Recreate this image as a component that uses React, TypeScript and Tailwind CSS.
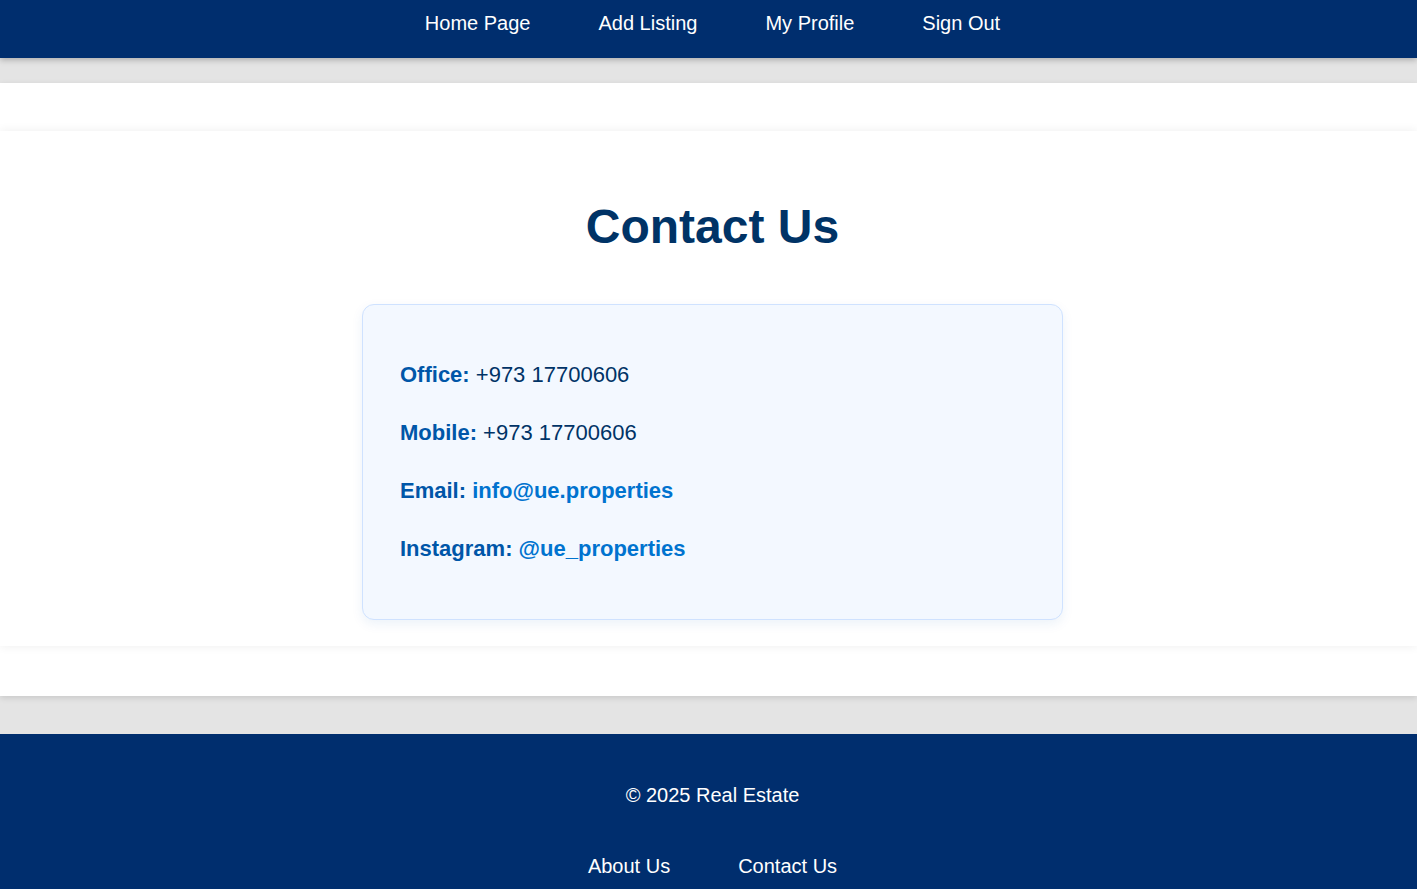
import React from 'react'

export default function App() {
    return (
        <div className="min-h-screen bg-[#e4e4e4] font-['Liberation_Sans',Arial,sans-serif]">
            {/* Top navigation */}
            <nav className="relative z-10 h-[58px] bg-[#002e6e] pt-[11px] shadow-[0_2px_6px_rgba(0,0,0,0.25)]">
                <ul className="flex justify-center gap-[68px] pl-[8px] text-[20px] leading-[24px] text-white">
                    <li><a href="#">Home Page</a></li>
                    <li><a href="#">Add Listing</a></li>
                    <li><a href="#">My Profile</a></li>
                    <li><a href="#">Sign Out</a></li>
                </ul>
            </nav>

            {/* Main content */}
            <main className="mt-[25px] bg-white pt-[48px] pb-[50px] shadow-[0_2px_6px_rgba(0,0,0,0.12)]">
                <section className="bg-white pt-[67px] pb-[26px] pl-[8px] shadow-[0_0_10px_rgba(0,0,0,0.07)]">
                    <h2 className="text-center text-[48px] leading-[58px] font-bold text-[#003366]">Contact Us</h2>

                    <div className="mx-auto mt-[48px] w-[701px] rounded-[12px] border border-[#cfe2ff] bg-[#f3f8ff] px-[37px] pt-[54px] pb-[54px] shadow-[0_4px_12px_rgba(0,86,179,0.08)]">
                        <div className="flex flex-col gap-[26px] text-[22px] leading-[32px] text-[#003366]">
                            <p><span className="font-bold text-[#0056a8]">Office:</span> +973 17700606</p>
                            <p><span className="font-bold text-[#0056a8]">Mobile:</span> +973 17700606</p>
                            <p>
                                <span className="font-bold text-[#0056a8]">Email:</span>{' '}
                                <a href="#" className="font-bold text-[#0073cf]">info@ue.properties</a>
                            </p>
                            <p>
                                <span className="font-bold text-[#0056a8]">Instagram:</span>{' '}
                                <a href="#" className="font-bold text-[#0073cf]">@ue_properties</a>
                            </p>
                        </div>
                    </div>
                </section>
            </main>

            {/* Footer */}
            <footer className="mt-[38px] bg-[#002e6e] pt-[49px] pb-[30px] text-white">
                <p className="pl-[8px] text-center text-[20px] leading-[24px]">&copy; 2025 Real Estate</p>
                <ul className="mt-[47px] flex justify-center gap-[68px] pl-[8px] text-[20px] leading-[24px]">
                    <li><a href="#">About Us</a></li>
                    <li><a href="#">Contact Us</a></li>
                </ul>
            </footer>
        </div>
    )
}
